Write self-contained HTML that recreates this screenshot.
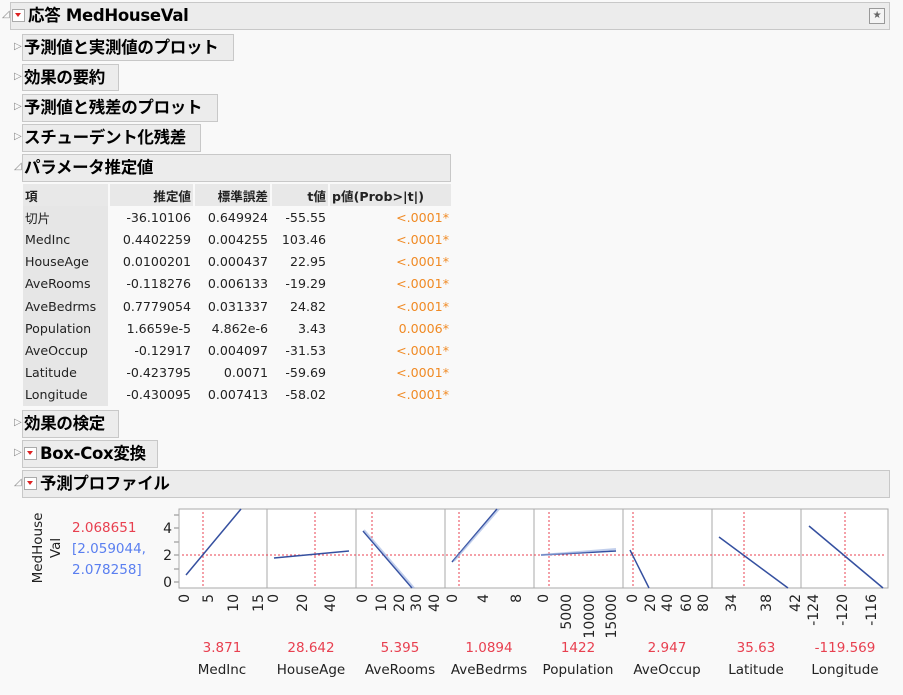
<!DOCTYPE html>
<html><head><meta charset="utf-8"><style>
body{margin:0;width:903px;height:695px;background:#f9f9f9;font-family:"DejaVu Sans","Noto Sans CJK JP",sans-serif;position:relative;overflow:hidden;color:#222}
.h{position:absolute;background:#ececec;border:1px solid #c8c8c8;font-weight:bold;font-size:16.5px;line-height:25px;padding-left:1px;box-sizing:border-box;color:#000;letter-spacing:-0.3px;white-space:nowrap}
.tri{position:absolute;font-size:10px;color:#888}
.rd{display:inline-block;width:11px;height:11px;border:1px solid #aaa;background:#fff;vertical-align:-1px;margin-right:3px;position:relative}
.rd:after{content:"";position:absolute;left:2px;top:3px;border-left:3.5px solid transparent;border-right:3.5px solid transparent;border-top:4px solid #d22}
table{position:absolute;left:21px;top:184px;border-collapse:separate;border-spacing:2px 0;font-size:12.6px;table-layout:fixed}
td{height:22.2px;padding:0 2px;text-align:right;white-space:nowrap;box-sizing:border-box;overflow:visible}
td:first-child{text-align:left;background:#e6e6e6}
tr.hd td{background:#e8e8e8;font-weight:bold}
.p{color:#f08a24}
</style></head><body>
<span class="tri" style="left:2px;top:9px">◿</span>
<div class="h" style="left:10px;top:2px;width:880px;height:28px"><span class="rd"></span>応答 MedHouseVal
<span style="position:absolute;right:4px;top:5px;width:14px;height:14px;border:1px solid #999;background:#f4f4f4;font-size:10px;line-height:14px;text-align:center;color:#666">★</span></div>
<span class="tri" style="left:14px;top:41px">▷</span><div class="h" style="left:22px;top:34px;width:212px;height:27px">予測値と実測値のプロット</div>
<span class="tri" style="left:14px;top:71px">▷</span><div class="h" style="left:22px;top:64px;width:97px;height:27px">効果の要約</div>
<span class="tri" style="left:14px;top:101px">▷</span><div class="h" style="left:22px;top:94px;width:196px;height:28px">予測値と残差のプロット</div>
<span class="tri" style="left:14px;top:131px">▷</span><div class="h" style="left:22px;top:124px;width:179px;height:28px">スチューデント化残差</div>
<span class="tri" style="left:14px;top:161px">◿</span><div class="h" style="left:22px;top:154px;width:429px;height:28px">パラメータ推定値</div>
<table>
<colgroup><col style="width:85px"><col style="width:83px"><col style="width:75px"><col style="width:56px"><col style="width:121px"></colgroup>
<tr class="hd"><td>項</td><td>推定値</td><td>標準誤差</td><td>t値</td><td style="text-align:left">p値(Prob&gt;|t|)</td></tr>
<tr><td>切片</td><td>-36.10106</td><td>0.649924</td><td>-55.55</td><td class="p">&lt;.0001*</td></tr>
<tr><td>MedInc</td><td>0.4402259</td><td>0.004255</td><td>103.46</td><td class="p">&lt;.0001*</td></tr>
<tr><td>HouseAge</td><td>0.0100201</td><td>0.000437</td><td>22.95</td><td class="p">&lt;.0001*</td></tr>
<tr><td>AveRooms</td><td>-0.118276</td><td>0.006133</td><td>-19.29</td><td class="p">&lt;.0001*</td></tr>
<tr><td>AveBedrms</td><td>0.7779054</td><td>0.031337</td><td>24.82</td><td class="p">&lt;.0001*</td></tr>
<tr><td>Population</td><td>1.6659e-5</td><td>4.862e-6</td><td>3.43</td><td class="p">0.0006*</td></tr>
<tr><td>AveOccup</td><td>-0.12917</td><td>0.004097</td><td>-31.53</td><td class="p">&lt;.0001*</td></tr>
<tr><td>Latitude</td><td>-0.423795</td><td>0.0071</td><td>-59.69</td><td class="p">&lt;.0001*</td></tr>
<tr><td>Longitude</td><td>-0.430095</td><td>0.007413</td><td>-58.02</td><td class="p">&lt;.0001*</td></tr>
</table>
<span class="tri" style="left:14px;top:417px">▷</span><div class="h" style="left:22px;top:410px;width:97px;height:28px">効果の検定</div>
<span class="tri" style="left:14px;top:447px">▷</span><div class="h" style="left:22px;top:440px;width:136px;height:28px"><span class="rd"></span>Box-Cox変換</div>
<span class="tri" style="left:14px;top:477px">◿</span><div class="h" style="left:22px;top:470px;width:868px;height:28px"><span class="rd"></span>予測プロファイル</div>
<svg width="903" height="695" style="position:absolute;left:0;top:0" font-family="DejaVu Sans, sans-serif" font-size="13.5">
<text transform="translate(42,548) rotate(-90)" text-anchor="middle" fill="#222">MedHouse</text>
<text transform="translate(60,548) rotate(-90)" text-anchor="middle" fill="#222">Val</text>
<text x="72" y="532" fill="#e84050">2.068651</text>
<text x="72" y="553" fill="#5a7ff0">[2.059044,</text>
<text x="72" y="574" fill="#5a7ff0">2.078258]</text>
<g fill="#222" text-anchor="end" font-size="14"><text x="172" y="587">0</text><text x="172" y="560">2</text><text x="172" y="533">4</text></g>
<g stroke="#888"><line x1="174" y1="582" x2="179" y2="582"/><line x1="174" y1="569" x2="179" y2="569"/><line x1="174" y1="555" x2="179" y2="555"/><line x1="174" y1="542" x2="179" y2="542"/><line x1="174" y1="528" x2="179" y2="528"/><line x1="174" y1="515" x2="179" y2="515"/></g>
<rect x="179" y="509" width="709" height="79" fill="#fff" stroke="#aaa"/>
<g stroke="#aaa"><line x1="267" y1="509" x2="267" y2="588"/><line x1="356" y1="509" x2="356" y2="588"/><line x1="445" y1="509" x2="445" y2="588"/><line x1="534" y1="509" x2="534" y2="588"/><line x1="623" y1="509" x2="623" y2="588"/><line x1="712" y1="509" x2="712" y2="588"/><line x1="801" y1="509" x2="801" y2="588"/></g>
<g stroke="#e84050" stroke-dasharray="2,2"><line x1="182" y1="555" x2="886" y2="555"/><line x1="203" y1="512" x2="203" y2="586"/><line x1="315" y1="512" x2="315" y2="586"/><line x1="372" y1="512" x2="372" y2="586"/><line x1="459" y1="512" x2="459" y2="586"/><line x1="549" y1="512" x2="549" y2="586"/><line x1="633" y1="512" x2="633" y2="586"/><line x1="744" y1="512" x2="744" y2="586"/><line x1="845" y1="512" x2="845" y2="586"/></g>
<g stroke="#3550a0" stroke-width="1.5"><line x1="186" y1="575" x2="241" y2="509"/><line x1="274" y1="558" x2="349" y2="551"/><line x1="363" y1="531" x2="412" y2="588"/><line x1="452" y1="562" x2="497" y2="509"/><line x1="541" y1="555" x2="616" y2="551"/><line x1="630" y1="550" x2="649" y2="588"/><line x1="719" y1="537" x2="788" y2="588"/><line x1="809" y1="526" x2="883" y2="588"/></g>
<g stroke="#9ab0e0" stroke-width="2" opacity="0.6"><line x1="364" y1="530" x2="414" y2="588"/><line x1="454" y1="561" x2="499" y2="509"/><line x1="541" y1="555" x2="616" y2="549"/></g>
<g fill="#222" text-anchor="end" font-size="14">
<text transform="translate(189,594) rotate(-90)">0</text><text transform="translate(213,594) rotate(-90)">5</text><text transform="translate(238,594) rotate(-90)">10</text><text transform="translate(263,594) rotate(-90)">15</text>
<text transform="translate(278,594) rotate(-90)">0</text><text transform="translate(307,594) rotate(-90)">20</text><text transform="translate(335,594) rotate(-90)">40</text>
<text transform="translate(367,594) rotate(-90)">0</text><text transform="translate(386,594) rotate(-90)">10</text><text transform="translate(404,594) rotate(-90)">20</text><text transform="translate(421,594) rotate(-90)">30</text><text transform="translate(439,594) rotate(-90)">40</text>
<text transform="translate(457,594) rotate(-90)">0</text><text transform="translate(488,594) rotate(-90)">4</text><text transform="translate(521,594) rotate(-90)">8</text>
<text transform="translate(548,594) rotate(-90)">0</text><text transform="translate(571,594) rotate(-90)">5000</text><text transform="translate(594,594) rotate(-90)">10000</text><text transform="translate(616,594) rotate(-90)">15000</text>
<text transform="translate(637,594) rotate(-90)">0</text><text transform="translate(655,594) rotate(-90)">20</text><text transform="translate(672,594) rotate(-90)">40</text><text transform="translate(691,594) rotate(-90)">60</text><text transform="translate(708,594) rotate(-90)">80</text>
<text transform="translate(736,594) rotate(-90)">34</text><text transform="translate(771,594) rotate(-90)">38</text><text transform="translate(800,594) rotate(-90)">42</text>
<text transform="translate(818,594) rotate(-90)">-124</text><text transform="translate(847,594) rotate(-90)">-120</text><text transform="translate(876,594) rotate(-90)">-116</text>
</g>
<g text-anchor="middle" fill="#e84050"><text x="222" y="652">3.871</text><text x="311" y="652">28.642</text><text x="400" y="652">5.395</text><text x="489" y="652">1.0894</text><text x="578" y="652">1422</text><text x="667" y="652">2.947</text><text x="756" y="652">35.63</text><text x="845" y="652">-119.569</text></g>
<g text-anchor="middle" fill="#222"><text x="222" y="674">MedInc</text><text x="311" y="674">HouseAge</text><text x="400" y="674">AveRooms</text><text x="489" y="674">AveBedrms</text><text x="578" y="674">Population</text><text x="667" y="674">AveOccup</text><text x="756" y="674">Latitude</text><text x="845" y="674">Longitude</text></g>
</svg>
</body></html>
